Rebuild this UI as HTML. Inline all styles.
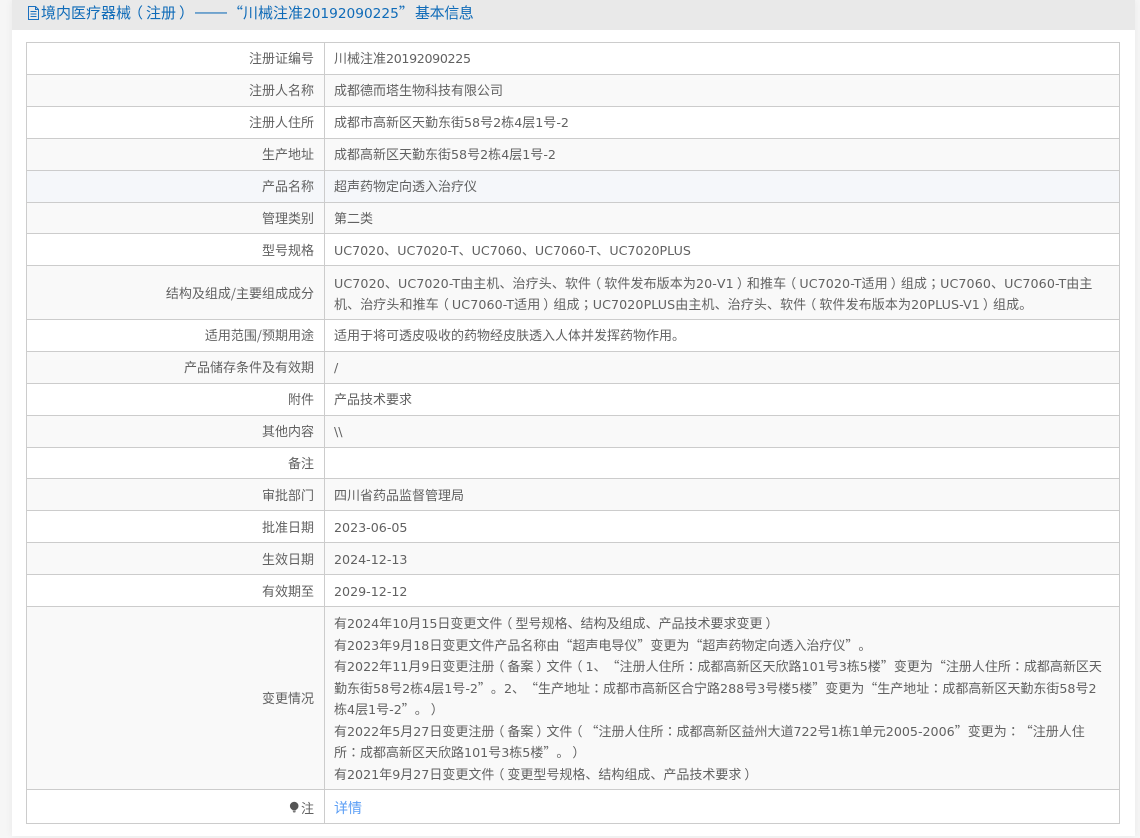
<!DOCTYPE html>
<html>
<head>
<meta charset="utf-8">
<title>基本信息</title>
<style>
html,body{margin:0;padding:0;width:1140px;height:838px;overflow:hidden;background:#f6f6f6;}
body{position:relative;font-family:"Noto Sans CJK SC","WenQuanYi Zen Hei",sans-serif;font-size:13px;color:#616161;text-spacing-trim:space-all;}
i{font-family:"DejaVu Sans",sans-serif;font-style:normal;font-size:12.65px;}
i.n{letter-spacing:-.35px;}
.o,.e{position:relative;}
.o{left:-3px;}
.e{left:3px;}
#panel{position:absolute;left:12px;top:0;width:1123px;height:836px;background:#fff;box-shadow:0 0 8px rgba(0,0,0,.06);}
#bar{position:absolute;left:12px;top:0;width:1123px;height:30px;background:#e9e9e9;}
.ti{position:absolute;top:0;height:26px;line-height:26px;font-size:15px;color:#0f6bb8;white-space:nowrap;}
.ti i{font-size:13.7px;}
#ic{position:absolute;left:27px;top:6px;}
.r{position:absolute;left:26px;width:1094px;box-sizing:border-box;border:1px solid #ccc;border-bottom:0;}
.s{background:#f9f9f9;}
.h{background:#f5f7fa;}
.l{position:absolute;left:0;top:0;bottom:0;width:297px;border-right:1px solid #ccc;}
.t{position:absolute;white-space:nowrap;left:0;width:287px;text-align:right;}
.v{position:absolute;white-space:nowrap;left:307px;}
#end{position:absolute;left:26px;top:823px;width:1094px;height:1px;background:#ccc;}
a{color:#5b9ef5;text-decoration:none;font-size:14px;}
.c{font-family:"Noto Sans CJK TC",sans-serif;}
</style>
</head>
<body>
<div id="panel"></div>
<div id="bar"></div>
<svg id="ic" width="13" height="14" viewBox="0 0 13 14" fill="none" stroke="#1a70c0" stroke-width="1"><path d="M1.5 .5H8.5L11.5 3.5V13.5H1.5Z"/><path d="M8.5 .5V3.5H11.5M3.5 5.5H9.5M3.5 8H9.5M3.5 10.5H9.5"/></svg>
<div class="ti" style="left:41px">境内医疗器械<span class="o">（</span>注册<span class="e">）</span></div>
<div class="ti" style="left:195px;font-size:16px;font-family:'Liberation Sans',sans-serif">——</div>
<div class="ti" style="left:228px">“川械注准<i>20192090225</i>”</div>
<div class="ti" style="left:415px;letter-spacing:-.4px">基本信息</div>

<div class="r" style="top:42px;height:32px;line-height:30px"><div class="l"></div><div class="t">注册证编号</div><div class="v">川械注准<i class="n">20192090225</i></div></div>
<div class="r s" style="top:74px;height:32px;line-height:30px"><div class="l"></div><div class="t">注册人名称</div><div class="v">成都德而塔生物科技有限公司</div></div>
<div class="r" style="top:106px;height:32px;line-height:30px"><div class="l"></div><div class="t">注册人住所</div><div class="v">成都市高新区天勤东街<i>58</i>号<i>2</i>栋<i>4</i>层<i>1</i>号<i>-2</i></div></div>
<div class="r s" style="top:138px;height:32px;line-height:30px"><div class="l"></div><div class="t">生产地址</div><div class="v">成都高新区天勤东街<i>58</i>号<i>2</i>栋<i>4</i>层<i>1</i>号<i>-2</i></div></div>
<div class="r h" style="top:170px;height:32px;line-height:30px"><div class="l"></div><div class="t">产品名称</div><div class="v">超声药物定向透入治疗仪</div></div>
<div class="r s" style="top:202px;height:32px;line-height:30px"><div class="l"></div><div class="t">管理类别</div><div class="v">第二类</div></div>
<div class="r" style="top:233px;height:32px;line-height:32px"><div class="l"></div><div class="t">型号规格</div><div class="v"><i>UC7020</i>、<i>UC7020-T</i>、<i>UC7060</i>、<i>UC7060-T</i>、<i>UC7020PLUS</i></div></div>
<div class="r s" style="top:265px;height:54px"><div class="l"></div><div class="t" style="top:0;line-height:54px">结构及组成/主要组成成分</div>
<div class="v" style="top:6px;line-height:22px;letter-spacing:.1px"><i>UC7020</i>、<i>UC7020-T</i>由主机、治疗头、软件<span class="o">（</span>软件发布版本为<i>20-V1</i><span class="e">）</span>和推车<span class="o">（</span><i>UC7020-T</i>适用<span class="e">）</span>组成<span class="c">；</span><i>UC7060</i>、<i>UC7060-T</i>由主</div>
<div class="v" style="top:27px;line-height:22px;letter-spacing:.1px">机、治疗头和推车<span class="o">（</span><i>UC7060-T</i>适用<span class="e">）</span>组成<span class="c">；</span><i>UC7020PLUS</i>由主机、治疗头、软件<span class="o">（</span>软件发布版本为<i>20PLUS-V1</i><span class="e">）</span>组成。</div></div>
<div class="r" style="top:319px;height:32px;line-height:30px"><div class="l"></div><div class="t">适用范围/预期用途</div><div class="v">适用于将可透皮吸收的药物经皮肤透入人体并发挥药物作用。</div></div>
<div class="r s" style="top:351px;height:32px;line-height:30px"><div class="l"></div><div class="t">产品储存条件及有效期</div><div class="v"><i>/</i></div></div>
<div class="r" style="top:383px;height:32px;line-height:30px"><div class="l"></div><div class="t">附件</div><div class="v">产品技术要求</div></div>
<div class="r s" style="top:415px;height:32px;line-height:30px"><div class="l"></div><div class="t">其他内容</div><div class="v"><i>\\</i></div></div>
<div class="r" style="top:447px;height:32px;line-height:30px"><div class="l"></div><div class="t">备注</div></div>
<div class="r s" style="top:478px;height:32px;line-height:32px"><div class="l"></div><div class="t">审批部门</div><div class="v">四川省药品监督管理局</div></div>
<div class="r" style="top:510px;height:32px;line-height:32px"><div class="l"></div><div class="t">批准日期</div><div class="v"><i>2023-06-05</i></div></div>
<div class="r s" style="top:542px;height:32px;line-height:32px"><div class="l"></div><div class="t">生效日期</div><div class="v"><i>2024-12-13</i></div></div>
<div class="r" style="top:574px;height:32px;line-height:32px"><div class="l"></div><div class="t">有效期至</div><div class="v"><i>2029-12-12</i></div></div>
<div class="r s" style="top:606px;height:183px"><div class="l"></div><div class="t" style="line-height:182px">变更情况</div>
<div class="v" style="top:5px;line-height:22px">有<i>2024</i>年<i>10</i>月<i>15</i>日变更文件<span class="o">（</span>型号规格、结构及组成、产品技术要求变更<span class="e">）</span></div>
<div class="v" style="top:27px;line-height:22px">有<i>2023</i>年<i>9</i>月<i>18</i>日变更文件产品名称由“超声电导仪”变更为“超声药物定向透入治疗仪”。</div>
<div class="v" style="top:48px;line-height:22px">有<i>2022</i>年<i>11</i>月<i>9</i>日变更注册<span class="o">（</span>备案<span class="e">）</span>文件<span class="o">（</span><i>1</i>、“注册人住所<span class="c">：</span>成都高新区天欣路<i>101</i>号<i>3</i>栋<i>5</i>楼”变更为“注册人住所<span class="c">：</span>成都高新区天</div>
<div class="v" style="top:70px;line-height:22px">勤东街<i>58</i>号<i>2</i>栋<i>4</i>层<i>1</i>号<i>-2</i>”。<i>2</i>、“生产地址<span class="c">：</span>成都市高新区合宁路<i>288</i>号<i>3</i>号楼<i>5</i>楼”变更为“生产地址<span class="c">：</span>成都高新区天勤东街<i>58</i>号<i>2</i></div>
<div class="v" style="top:91px;line-height:22px">栋<i>4</i>层<i>1</i>号<i>-2</i>”。<span class="e">）</span></div>
<div class="v" style="top:113px;line-height:22px">有<i>2022</i>年<i>5</i>月<i>27</i>日变更注册<span class="o">（</span>备案<span class="e">）</span>文件<span class="o">（</span>“注册人住所<span class="c">：</span>成都高新区益州大道<i>722</i>号<i>1</i>栋<i>1</i>单元<i>2005-2006</i>”变更为<span class="c">：</span>“注册人住</div>
<div class="v" style="top:134px;line-height:22px">所<span class="c">：</span>成都高新区天欣路<i>101</i>号<i>3</i>栋<i>5</i>楼”。<span class="e">）</span></div>
<div class="v" style="top:156px;line-height:22px">有<i>2021</i>年<i>9</i>月<i>27</i>日变更文件<span class="o">（</span>变更型号规格、结构组成、产品技术要求<span class="e">）</span></div></div>
<div class="r" style="top:789px;height:34px;line-height:35px"><div class="l"></div><div class="t">注</div><div class="v"><a href="#">详情</a></div></div>
<div id="end"></div>
<svg style="position:absolute;left:289px;top:801px" width="11" height="13" viewBox="0 0 11 13"><circle cx="5.2" cy="5" r="4.3" fill="#555"/><path d="M3.5 9.5H7L6.2 11.5H4.3Z" fill="#777"/></svg>
</body>
</html>
